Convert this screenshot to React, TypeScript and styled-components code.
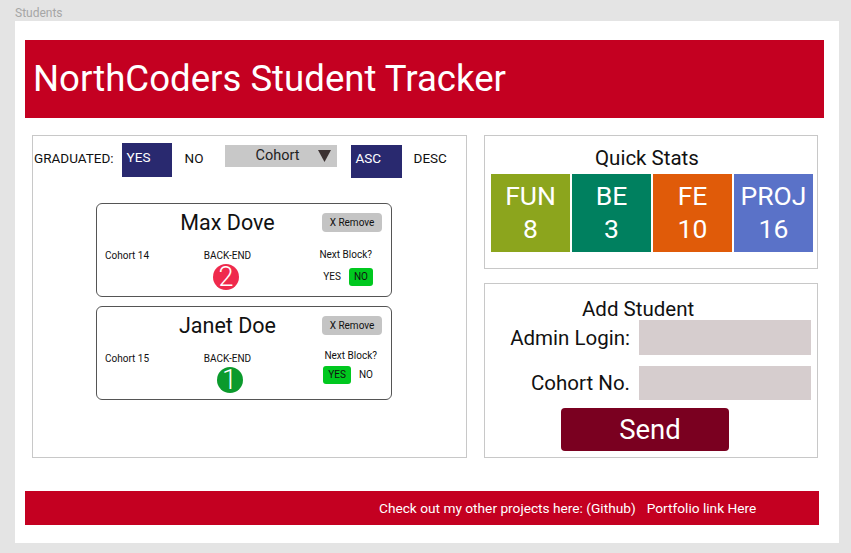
import React from "react";
import styled, { createGlobalStyle } from "styled-components";

const Global = createGlobalStyle`
  html, body { margin: 0; padding: 0; background: #e4e4e4; }
  body { font-family: Roboto, "Liberation Sans", Arial, sans-serif; color: #111; }
  * { box-sizing: border-box; }
`;

const RED = "#c40021";

const Page = styled.div`
  width: 851px;
  height: 553px;
  padding-left: 15px;
  overflow: hidden;
`;

const PageLabel = styled.div`
  height: 21px;
  padding-top: 6px;
  font-size: 12px;
  line-height: 15px;
  color: #a6a6a6;
`;

const Frame = styled.div`
  width: 824px;
  height: 522px;
  background: #fff;
  padding: 19px 15px 0 10px;
  display: flex;
  flex-direction: column;
`;

const Header = styled.header`
  height: 78px;
  background: ${RED};
  display: flex;
  align-items: center;
  padding-left: 8px;
`;

const Title = styled.h1`
  margin: 0;
  font-size: 36.6px;
  font-weight: 400;
  color: #fff;
  line-height: 40px;
`;

const Main = styled.main`
  display: flex;
  gap: 17px;
  margin-top: 17px;
  padding-left: 7px;
  height: 323px;
`;

const LeftPanel = styled.section`
  width: 435px;
  height: 323px;
  border: 1px solid #c8c8c8;
  padding: 7px 0 0 1px;
`;

const FilterRow = styled.div`
  display: flex;
  align-items: flex-start;
  font-size: 13.5px;
  line-height: 16px;
`;

const FilterText = styled.span<{ $ml: number }>`
  margin-top: 7px;
  margin-left: ${(p) => p.$ml}px;
`;

const ToggleBox = styled.div<{ $ml: number; $w: number; $h: number; $mt: number; $pt: number }>`
  margin-left: ${(p) => p.$ml}px;
  margin-top: ${(p) => p.$mt}px;
  width: ${(p) => p.$w}px;
  height: ${(p) => p.$h}px;
  padding: ${(p) => p.$pt}px 5px 0 5px;
  background: #29296f;
  color: #fff;
  flex-shrink: 0;
`;

const Select = styled.div`
  margin-left: 21px;
  margin-top: 2px;
  width: 112px;
  height: 22px;
  flex-shrink: 0;
  background: #c8c8c8;
  display: flex;
  align-items: center;
  justify-content: space-between;
  padding: 0 6px 0 31px;
  font-size: 14.5px;
  color: #222;
`;

const CardList = styled.div`
  margin: 25px 0 0 62px;
  display: flex;
  flex-direction: column;
  gap: 9px;
`;

const Card = styled.div`
  width: 296px;
  height: 94px;
  border: 1px solid #555;
  border-radius: 6px;
  padding: 9px 9px 0 8px;
  display: grid;
  grid-template-columns: 74px 97px 1fr;
  grid-template-rows: 19px 31px 27px;
  font-size: 10px;
`;

const Name = styled.div`
  grid-column: 2;
  grid-row: 1;
  justify-self: center;
  white-space: nowrap;
  font-size: 21.5px;
  line-height: 19px;
`;

const RemoveBtn = styled.div`
  grid-column: 3;
  grid-row: 1;
  justify-self: end;
  width: 60px;
  height: 19px;
  border-radius: 4px;
  background: #c4c4c4;
  font-size: 10px;
  display: flex;
  align-items: center;
  justify-content: center;
`;

const Cell = styled.div<{ $col: number }>`
  grid-column: ${(p) => p.$col};
  grid-row: 2;
  align-self: end;
  line-height: 14px;
  white-space: nowrap;
  justify-self: ${(p) => (p.$col === 2 ? "center" : "start")};
`;

const Badge = styled.div<{ $bg: string; $dx: number }>`
  grid-column: 2;
  grid-row: 3;
  justify-self: center;
  margin-top: 1px;
  margin-left: ${(p) => p.$dx}px;
  width: 26px;
  height: 26px;
  border-radius: 50%;
  background: ${(p) => p.$bg};
  color: #fff;
  font-size: 27px;
  font-weight: 300;
  line-height: 26px;
  text-align: center;
`;

const NextBlock = styled.div<{ $mr: number; $mt: number; $gap: number }>`
  grid-column: 3;
  grid-row: 2 / 4;
  justify-self: end;
  margin-right: ${(p) => p.$mr}px;
  margin-top: ${(p) => p.$mt}px;
  display: flex;
  flex-direction: column;
  align-items: center;
  gap: ${(p) => p.$gap}px;
  line-height: 14px;
`;

const Toggles = styled.div`
  display: flex;
  gap: 3px;
`;

const ToggleOpt = styled.span<{ $on: boolean }>`
  height: 18px;
  line-height: 18px;
  padding: 0 5px;
  border-radius: 3px;
  background: ${(p) => (p.$on ? "#00c81f" : "transparent")};
`;

const RightCol = styled.div`
  width: 334px;
  display: flex;
  flex-direction: column;
  gap: 14px;
`;

const StatsPanel = styled.section`
  height: 134px;
  border: 1px solid #c8c8c8;
  padding: 10px 0 0 6px;
`;

const PanelTitle = styled.div<{ $pl: number }>`
  font-size: 20.5px;
  line-height: 24px;
  padding-left: ${(p) => p.$pl}px;
`;

const Tiles = styled.div`
  margin-top: 4px;
  display: flex;
  gap: 2px;
`;

const Tile = styled.div<{ $bg: string }>`
  width: 79px;
  height: 78px;
  background: ${(p) => p.$bg};
  color: #fff;
  font-size: 26.5px;
  line-height: 33px;
  padding-top: 5px;
  text-align: center;
`;

const AddPanel = styled.section`
  height: 175px;
  border: 1px solid #c8c8c8;
  padding: 13px 6px 0 0;
`;

const FormGrid = styled.div`
  display: grid;
  grid-template-columns: 1fr 172px;
  column-gap: 9px;
  row-gap: 11px;
  margin-top: -1px;
  align-items: center;
`;

const Label = styled.label`
  text-align: right;
  font-size: 20.5px;
`;

const Input = styled.div<{ $h: number }>`
  height: ${(p) => p.$h}px;
  background: #d6cdce;
`;

const SendRow = styled.div`
  margin-top: 8px;
  padding-left: 76px;
`;

const SendBtn = styled.div`
  width: 168px;
  height: 43px;
  border-radius: 4px;
  background: #7a0020;
  color: #fff;
  font-size: 27.5px;
  display: flex;
  align-items: center;
  justify-content: center;
  padding-left: 10px;
`;

const Footer = styled.footer`
  margin-top: 33px;
  width: 794px;
  height: 34px;
  background: ${RED};
  color: #fff;
  font-size: 13.7px;
  display: flex;
  align-items: center;
  gap: 11px;
  padding-left: 354px;
`;

type Student = {
  name: string;
  cohort: number;
  block: string;
  num: number;
  badge: string;
  next: boolean;
  dx: number;
  mr: number;
  mt: number;
  gap: number;
};

const students: Student[] = [
  { name: "Max Dove", cohort: 14, block: "BACK-END", num: 2, badge: "#ef2a4c", next: false, dx: -3, mr: 9, mt: 16, gap: 6 },
  { name: "Janet Doe", cohort: 15, block: "BACK-END", num: 1, badge: "#0b9a2c", next: true, dx: 4, mr: 4, mt: 14, gap: 3 },
];

const stats = [
  { label: "FUN", n: 8, bg: "#8ca51d" },
  { label: "BE", n: 3, bg: "#00805f" },
  { label: "FE", n: 10, bg: "#e05b09" },
  { label: "PROJ", n: 16, bg: "#5a72c8" },
];

export default function App() {
  return (
    <Page>
      <Global />
      <PageLabel>Students</PageLabel>
      <Frame>
        <Header>
          <Title>NorthCoders Student Tracker</Title>
        </Header>
        <Main>
          <LeftPanel>
            <FilterRow>
              <FilterText $ml={0}>GRADUATED:</FilterText>
              <ToggleBox $ml={8} $w={50} $h={34} $mt={0} $pt={6}>YES</ToggleBox>
              <FilterText $ml={13}>NO</FilterText>
              <Select>
                <span>Cohort</span>
                <svg width="13" height="12" viewBox="0 0 13 12">
                  <path d="M0 0 L13 0 L6.5 12 Z" fill="#3b3131" />
                </svg>
              </Select>
              <ToggleBox $ml={14} $w={51} $h={33} $mt={2} $pt={5}>ASC</ToggleBox>
              <FilterText $ml={12}>DESC</FilterText>
            </FilterRow>
            <CardList>
              {students.map((s) => (
                <Card key={s.name}>
                  <Name>{s.name}</Name>
                  <RemoveBtn>X Remove</RemoveBtn>
                  <Cell $col={1}>Cohort {s.cohort}</Cell>
                  <Cell $col={2}>{s.block}</Cell>
                  <Badge $bg={s.badge} $dx={s.dx}>{s.num}</Badge>
                  <NextBlock $mr={s.mr} $mt={s.mt} $gap={s.gap}>
                    <span>Next Block?</span>
                    <Toggles>
                      <ToggleOpt $on={s.next}>YES</ToggleOpt>
                      <ToggleOpt $on={!s.next}>NO</ToggleOpt>
                    </Toggles>
                  </NextBlock>
                </Card>
              ))}
            </CardList>
          </LeftPanel>
          <RightCol>
            <StatsPanel>
              <PanelTitle $pl={104}>Quick Stats</PanelTitle>
              <Tiles>
                {stats.map((t) => (
                  <Tile key={t.label} $bg={t.bg}>
                    {t.label}
                    <br />
                    {t.n}
                  </Tile>
                ))}
              </Tiles>
            </StatsPanel>
            <AddPanel>
              <PanelTitle $pl={97}>Add Student</PanelTitle>
              <FormGrid>
                <Label>Admin Login:</Label>
                <Input $h={35} />
                <Label>Cohort No.</Label>
                <Input $h={34} />
              </FormGrid>
              <SendRow>
                <SendBtn>Send</SendBtn>
              </SendRow>
            </AddPanel>
          </RightCol>
        </Main>
        <Footer>
          <span>Check out my other projects here: (Github)</span>
          <span>Portfolio link Here</span>
        </Footer>
      </Frame>
    </Page>
  );
}
